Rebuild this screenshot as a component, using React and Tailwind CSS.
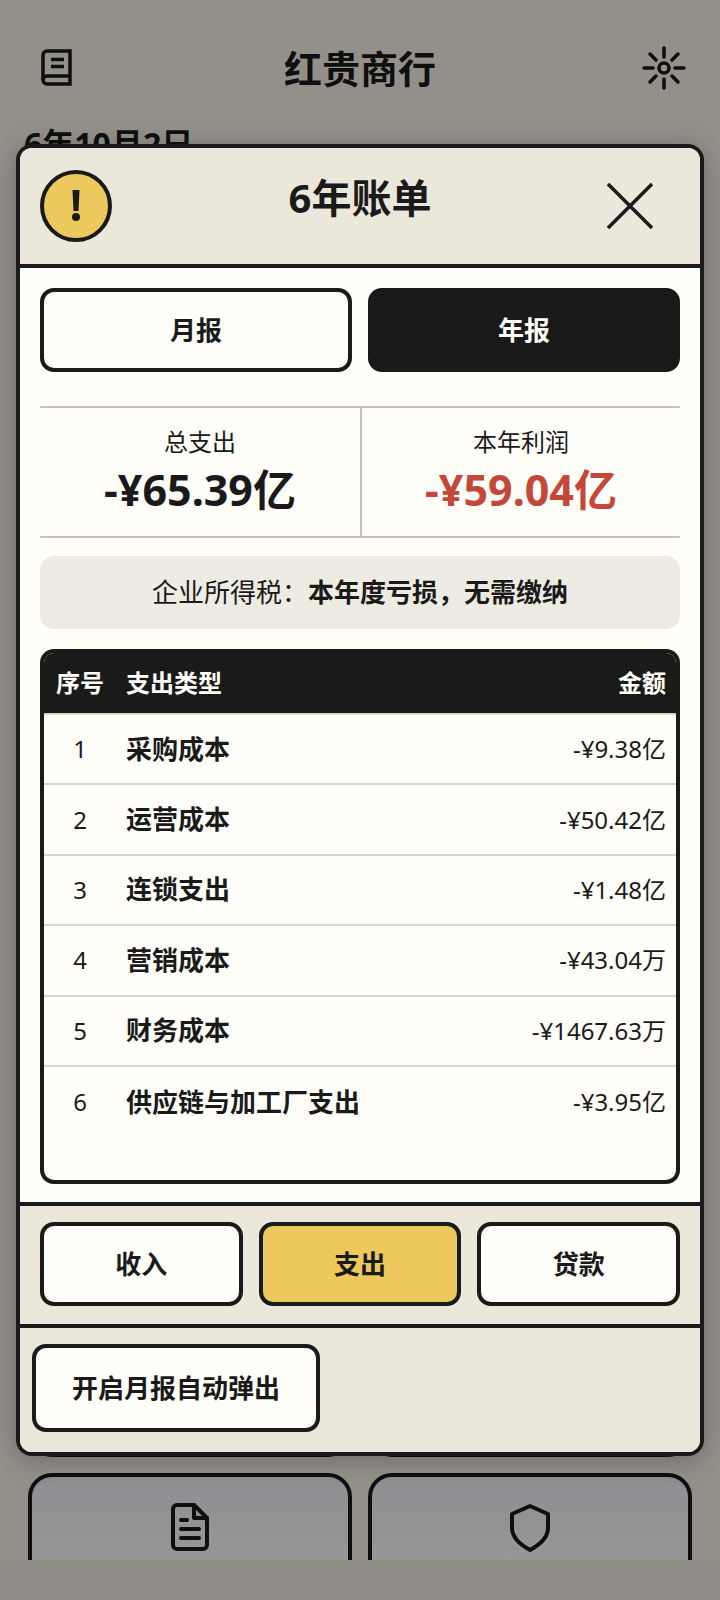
const font = { fontFamily: '"Noto Sans", "Noto Sans CJK SC", sans-serif' };

const rows = [
  ["1", "采购成本", "-¥9.38亿"],
  ["2", "运营成本", "-¥50.42亿"],
  ["3", "连锁支出", "-¥1.48亿"],
  ["4", "营销成本", "-¥43.04万"],
  ["5", "财务成本", "-¥1467.63万"],
  ["6", "供应链与加工厂支出", "-¥3.95亿"],
];

function Background() {
  return (
    <div className="h-[1560px] overflow-hidden bg-[#f5f0e6] text-[#1a1a1a]">
      <div className="grid h-[120px] grid-cols-[1fr_auto_1fr] items-center px-[34px] pt-4">
        <svg className="ml-[7px] mb-[1px]" width="31" height="37" viewBox="0 0 31 37" fill="none" stroke="currentColor" strokeWidth="3.5">
          <path d="M6 2h23v33H6a4 4 0 0 1-4-4V6a4 4 0 0 1 4-4z" />
          <path d="M2 31a4 4 0 0 1 4-4h23M10 10.5h13M10 17.5h13" />
        </svg>
        <h1 className="text-[38px] font-bold leading-[50px]">红贵商行</h1>
        <svg className="justify-self-end" width="44" height="44" viewBox="0 0 44 44" fill="none" stroke="currentColor" strokeWidth="3.5" strokeLinecap="round">
          <circle cx="22" cy="22" r="5" />
          <path d="M22 2v9M22 33v9M2 22h9M33 22h9M8 8l6 6M30 30l6 6M8 36l6-6M30 14l6-6" />
        </svg>
      </div>
      <div className="mt-1 pl-6 text-[32px] font-bold leading-[40px]">6年10月2日</div>
      <div className="mt-[1133px] grid grid-cols-2 gap-4 px-7">
        <div className="h-[160px] rounded-[24px] border-4 border-[#1a1a1a]" />
        <div className="h-[160px] rounded-[24px] border-4 border-[#1a1a1a]" />
      </div>
      <div className="mt-4 grid grid-cols-2 gap-4 px-7">
        <div className="flex h-[160px] justify-center rounded-[24px] border-4 border-[#1a1a1a] bg-linear-to-b from-[#eceef3] to-[#fcfcfc] to-55% pt-[26px]">
          <svg width="38" height="48" viewBox="0 0 38 48" fill="none" stroke="currentColor" strokeWidth="4" strokeLinecap="round" strokeLinejoin="round">
            <path d="M6 2h17l13 13v27a4 4 0 0 1-4 4H6a4 4 0 0 1-4-4V6a4 4 0 0 1 4-4z" />
            <path d="M23 2v13h13M10 17h6M10 26h18M10 35h18" />
          </svg>
        </div>
        <div className="flex h-[160px] justify-center rounded-[24px] border-4 border-[#1a1a1a] bg-linear-to-b from-[#eceef3] to-[#fcfcfc] to-55% pt-[27px]">
          <svg width="40" height="48" viewBox="0 0 40 48" fill="none" stroke="currentColor" strokeWidth="4" strokeLinejoin="round">
            <path d="M20 2l18 8v14c0 9-7 16-18 22C9 40 2 33 2 24V10z" />
          </svg>
        </div>
      </div>
    </div>
  );
}

export default function App() {
  return (
    <div className="relative h-[1600px] w-[720px] overflow-hidden bg-[#f0ece4]" style={font}>
      <Background />
      <div className="absolute inset-0 bg-black/40" />
      <div className="absolute left-4 top-[144px] flex h-[1312px] w-[688px] flex-col overflow-hidden rounded-[16px] border-4 border-[#1a1a1a] bg-[#fffef9] text-[#1a1a1a] shadow-[0_4px_24px_rgba(0,0,0,0.25)]">
        <div className="grid h-[120px] grid-cols-[1fr_auto_1fr] items-start border-b-4 border-[#1a1a1a] bg-[#ece7db] px-5 pt-[22px]">
          <div className="flex h-[72px] w-[72px] items-center justify-center rounded-full border-4 border-[#1a1a1a] bg-[#edc85c]">
            <svg width="10" height="32" viewBox="0 0 10 32" fill="currentColor">
              <path d="M1.5 0h7L7.5 21h-5z" />
              <circle cx="5" cy="27" r="4" />
            </svg>
          </div>
          <h2 className="text-[40px] font-bold leading-[56px]">6年账单</h2>
          <svg className="mr-[26px] mt-[12px] justify-self-end" width="48" height="48" viewBox="0 0 48 48" stroke="currentColor" strokeWidth="3.5">
            <path d="M2 2l44 44M46 2L2 46" />
          </svg>
        </div>
        <div className="flex-1 px-5 pt-5">
          <div className="grid grid-cols-2 gap-4">
            <button className="h-[84px] rounded-[14px] border-4 border-[#1a1a1a] text-[26px] font-bold">月报</button>
            <button className="h-[84px] rounded-[14px] bg-[#1a1a1a] text-[26px] font-bold text-[#fffef9]">年报</button>
          </div>
          <div className="mt-[34px] grid h-[132px] grid-cols-2 border-y-2 border-[#c8c3bb]">
            <div className="pt-4 text-center">
              <div className="text-[24px] leading-[36px]">总支出</div>
              <div className="text-[43px] font-bold leading-[60px]">-¥65.39亿</div>
            </div>
            <div className="border-l-2 border-[#c8c3bb] pt-4 text-center">
              <div className="text-[24px] leading-[36px]">本年利润</div>
              <div className="text-[43px] font-bold leading-[60px] text-[#c4473a]">-¥59.04亿</div>
            </div>
          </div>
          <div className="mt-[18px] flex h-[73px] items-center justify-center rounded-[14px] bg-[#eeebe3] text-[26px]">
            企业所得税：<span className="font-bold">本年度亏损，无需缴纳</span>
          </div>
          <div className="mt-5 h-[535px] overflow-hidden rounded-[14px] border-4 border-[#1a1a1a]">
            <div className="flex h-[62px] items-center border-b-2 border-[#d9d6d0] bg-[#1a1a1a] pr-[10px] text-[24px] font-bold text-[#fffef9]">
              <span className="w-[72px] text-center">序号</span>
              <span className="flex-1 pl-[10px]">支出类型</span>
              <span>金额</span>
            </div>
            {rows.map(([no, name, amount], i) => (
              <div key={no} className={`flex h-[70.4px] items-center pr-[10px] text-[24px] ${i < 5 ? "border-b-2 border-[#d9d6d0]" : ""}`}>
                <span className="w-[72px] text-center">{no}</span>
                <span className="flex-1 pl-[10px] text-[26px] font-bold">{name}</span>
                <span>{amount}</span>
              </div>
            ))}
          </div>
        </div>
        <div className="grid grid-cols-3 gap-4 border-y-4 border-[#1a1a1a] bg-[#ece7db] px-5 pb-[18px] pt-4">
          <button className="h-[84px] rounded-[14px] border-4 border-[#1a1a1a] bg-[#fffef9] text-[26px] font-bold">收入</button>
          <button className="h-[84px] rounded-[14px] border-4 border-[#1a1a1a] bg-[#edc85c] text-[26px] font-bold">支出</button>
          <button className="h-[84px] rounded-[14px] border-4 border-[#1a1a1a] bg-[#fffef9] text-[26px] font-bold">贷款</button>
        </div>
        <div className="h-[124px] bg-[#ece7db] pl-3 pt-4">
          <button className="h-[88px] w-[288px] rounded-[14px] border-4 border-[#1a1a1a] bg-[#fffef9] text-[26px] font-bold">开启月报自动弹出</button>
        </div>
      </div>
    </div>
  );
}
